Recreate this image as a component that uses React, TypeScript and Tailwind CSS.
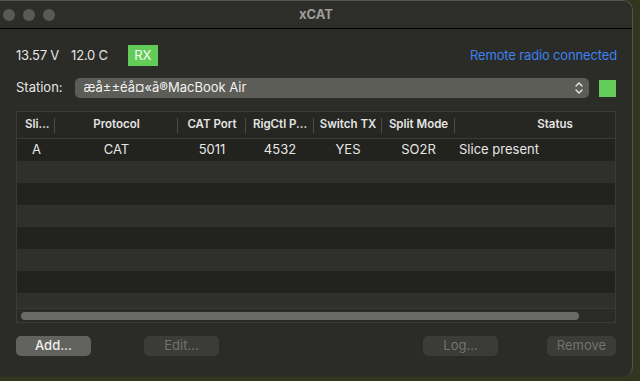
const font = { fontFamily: "Inter, 'Noto Sans', 'DejaVu Sans', sans-serif" };

const columns = [
  { label: "Sli...", width: "w-[38px]", align: "justify-start pl-[8px]" },
  { label: "Protocol", width: "w-[123px]", align: "justify-center" },
  { label: "CAT Port", width: "w-[68px]", align: "justify-center" },
  { label: "RigCtl P...", width: "w-[68px]", align: "justify-center" },
  { label: "Switch TX", width: "w-[68px]", align: "justify-center" },
  { label: "Split Mode", width: "w-[73px]", align: "justify-center" },
  { label: "Status", width: "w-[200px]", align: "justify-center" },
];

const row = ["A", "CAT", "5011", "4532", "YES", "SO2R", "Slice present"];

function Chevrons() {
  return (
    <svg width="10" height="14" viewBox="0 0 10 14" fill="none" stroke="#e8e8e8" strokeWidth="1.4" strokeLinecap="round" strokeLinejoin="round">
      <path d="M2 5 L5 2 L8 5" />
      <path d="M2 9 L5 12 L8 9" />
    </svg>
  );
}

function Button({ label, disabled, width }: { label: string; disabled?: boolean; width: string }) {
  return (
    <button
      type="button"
      className={`flex h-[20px] ${width} items-center justify-center rounded-[5px] text-[13px] ${
        disabled ? "bg-[#3b3b38] text-[#727270]" : "bg-[#62625e] font-medium text-[#f0f0f0]"
      }`}
    >
      {label}
    </button>
  );
}

export default function App() {
  return (
    <div className="h-[381px] w-[640px] overflow-hidden bg-[#33361f]" style={font}>
      <div className="flex h-[377px] w-[633px] flex-col overflow-hidden rounded-r-[10px] border-r border-t border-[#55554f] bg-[#2b2b28]">
        {/* title bar */}
        <div className="relative flex h-[28px] shrink-0 items-center border-b border-black bg-[#2d2e2a] pl-[3px]">
          <div className="flex gap-[8px]">
            <span className="h-[12px] w-[12px] rounded-full bg-[#595955]" />
            <span className="h-[12px] w-[12px] rounded-full bg-[#595955]" />
            <span className="h-[12px] w-[12px] rounded-full bg-[#595955]" />
          </div>
          <div className="absolute inset-x-0 text-center text-[13px] font-bold text-[#9d9d9a]">xCAT</div>
        </div>

        <div className="flex flex-col px-[16px] pt-[16px]">
          {/* status row */}
          <div className="flex h-[21px] items-center text-[13px] text-[#e6e6e4]">
            <span className="tracking-[-0.2px]">13.57 V</span>
            <span className="ml-[12px] tracking-[-0.2px]">12.0 C</span>
            <span className="ml-[20px] flex h-[21px] w-[30px] items-center justify-center bg-[#63cc58] text-[#f4fff2]">RX</span>
            <span className="ml-auto mr-[-1px] tracking-[-0.15px] text-[#3d82f0]">Remote radio connected</span>
          </div>

          {/* station row */}
          <div className="mt-[12px] flex h-[20px] items-center text-[13px] text-[#e6e6e4]">
            <span>Station:</span>
            <div className="ml-[12px] flex h-[20px] w-[515px] items-center rounded-[5px] bg-[#5d5d58] pl-[9px] pr-[5px]">
              <span className="flex-1 truncate text-[#f2f2f2]">æå±±éå¤«ã®MacBook Air</span>
              <Chevrons />
            </div>
            <span className="ml-[10px] h-[17px] w-[17px] bg-[#63cc58]" />
          </div>

          {/* table */}
          <div className="mt-[13px] flex h-[212px] flex-col overflow-hidden border border-[#3a3a37] bg-[#22221f]">
            <div className="flex h-[27px] shrink-0 border-b border-[#3a3a37] bg-[#262623] text-[11.5px] font-semibold text-[#e4e4e2]">
              {columns.map((c, i) => (
                <div key={c.label} className={`relative flex shrink-0 items-center ${c.width} ${c.align}`}>
                  {c.label}
                  {i < columns.length - 1 && (
                    <span className="absolute right-0 top-[6px] h-[15px] w-px bg-[#4a4a46]" />
                  )}
                </div>
              ))}
            </div>
            <div className="flex h-[22px] shrink-0 items-center bg-[#22221f] text-[13px] text-[#e6e6e4]">
              {columns.map((c, i) => (
                <div
                  key={c.label}
                  className={`flex shrink-0 ${c.width} ${
                    i === 0 ? "justify-center pl-[1px]" : i === 6 ? "justify-start pl-[4px]" : "justify-center"
                  }`}
                >
                  {row[i]}
                </div>
              ))}
            </div>
            {[0, 1, 2, 3, 4, 5].map((n) => (
              <div key={n} className={`h-[22px] shrink-0 ${n % 2 === 0 ? "bg-[#2f302b]" : "bg-[#22221f]"}`} />
            ))}
            <div className="h-[15px] shrink-0 bg-[#2f302b]" />
            <div className="flex flex-1 items-center border-t border-[#383835] bg-[#2a2a27] px-[4px]">
              <div className="h-[8px] w-[558px] rounded-full bg-[#6a6a68]" />
            </div>
          </div>

          {/* buttons */}
          <div className="mt-[13px] flex items-center">
            <Button label="Add..." width="w-[75px]" />
            <div className="ml-[53px]">
              <Button label="Edit..." disabled width="w-[75px]" />
            </div>
            <div className="ml-[204px]">
              <Button label="Log..." disabled width="w-[75px]" />
            </div>
            <div className="ml-auto">
              <Button label="Remove" disabled width="w-[69px]" />
            </div>
          </div>
        </div>
      </div>
    </div>
  );
}
